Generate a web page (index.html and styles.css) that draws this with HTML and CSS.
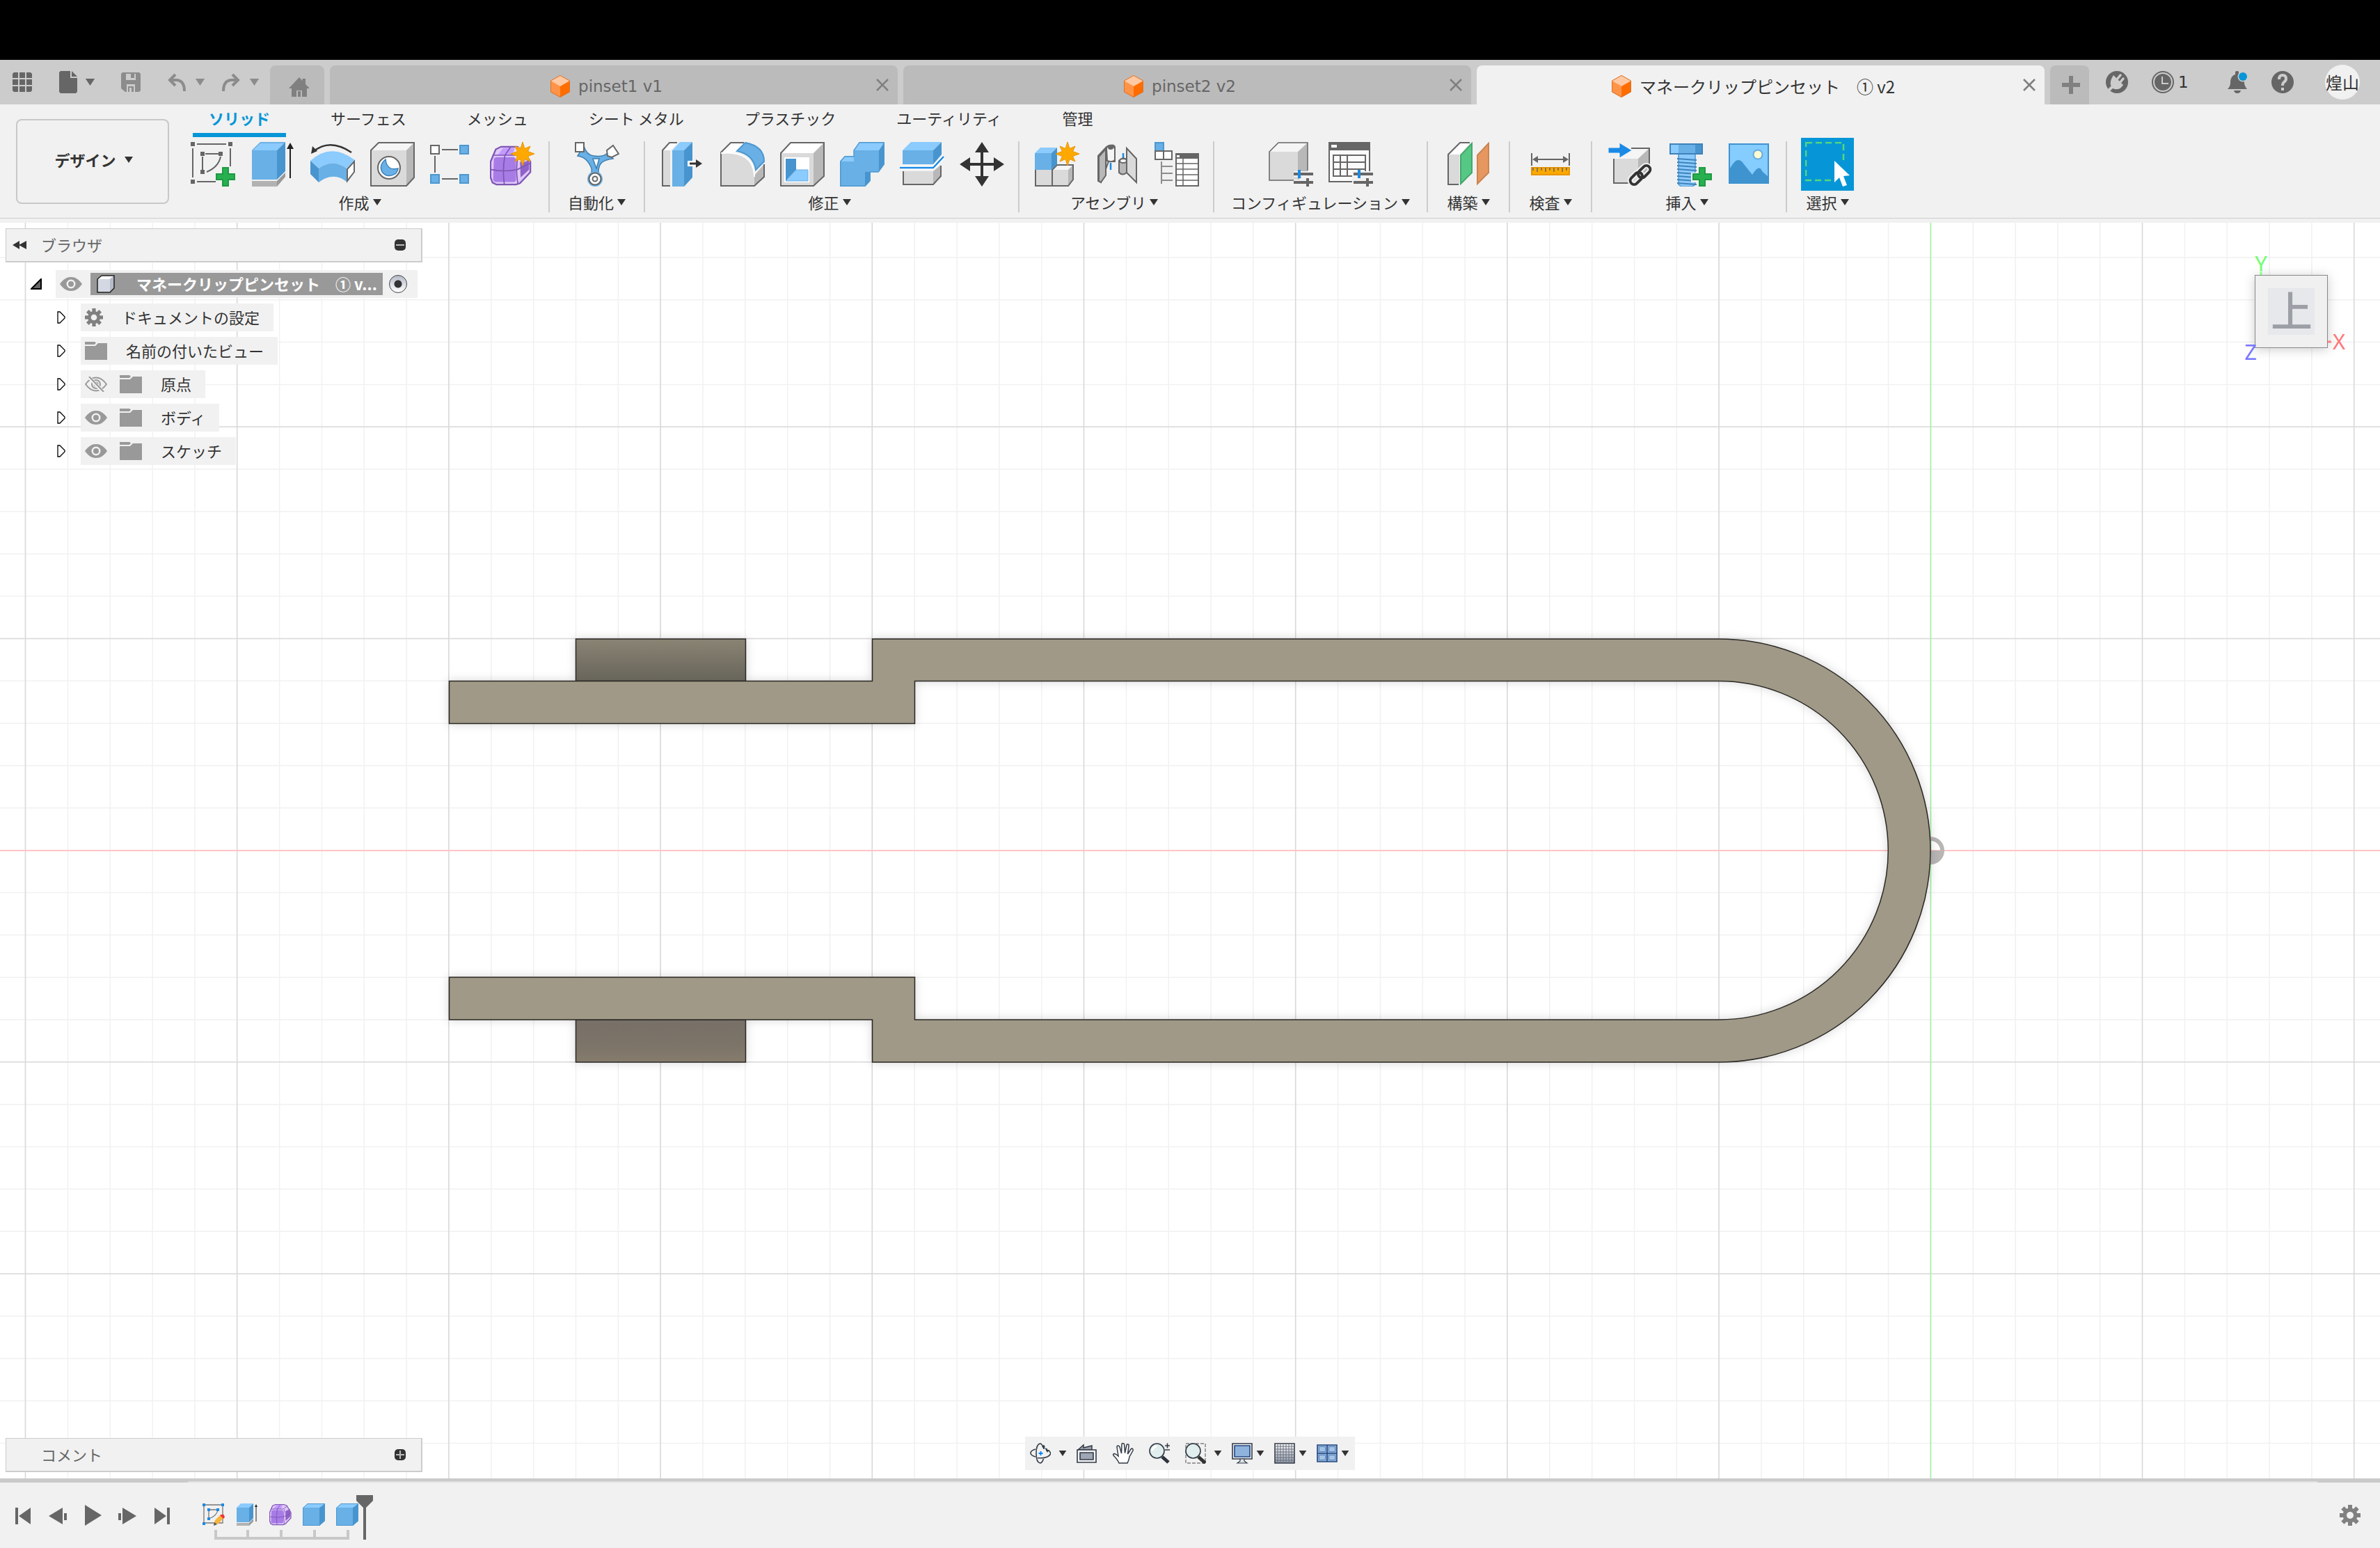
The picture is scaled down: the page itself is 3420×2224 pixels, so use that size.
FILE: index.html
```html
<!DOCTYPE html>
<html lang="ja">
<head>
<meta charset="utf-8">
<title>マネークリップピンセット ① v2</title>
<link rel="stylesheet" href="styles.css">
</head>
<body>
<svg class="defs" aria-hidden="true">
  <defs>
    <symbol id="caret" viewBox="0 0 12 9"><path d="M0 0h12L6 9z" fill="currentColor"/></symbol>
    <symbol id="doc" viewBox="0 0 28 32">
      <path d="M14 0 28 8v16L14 32 0 24V8z" fill="#ff6d00"/>
      <path d="M0 8l14 8v16L0 24z" fill="#ff9448"/>
      <path d="M14 0 28 8 14 16 0 8z" fill="#ffc9a3"/>
      <path d="M14 .5 27.500 8v16L14 31.500.5 24V8z" fill="none" stroke="#d9742b" stroke-width="1"/>
    </symbol>
    <symbol id="close" viewBox="0 0 18 18"><path d="M1 1l16 16M17 1 1 17" stroke="#808080" stroke-width="2.600" fill="none"/></symbol>
    <symbol id="eye" viewBox="0 0 32 20">
      <path d="M0 10C5 3 10 0 16 0s11 3 16 10c-5 7-10 10-16 10S5 17 0 10z" fill="#999"/>
      <circle cx="16" cy="10" r="6.500" fill="#f1f1f1"/><circle cx="16" cy="10" r="4" fill="#999"/>
    </symbol>
    <symbol id="eye-off" viewBox="0 0 32 22">
      <g fill="none" stroke="#999" stroke-width="2">
        <path d="M1 11C6 4 10 1.500 16 1.500S26 4 31 11c-5 7-9 9.500-15 9.500S6 18 1 11z"/>
        <circle cx="16" cy="11" r="6"/><circle cx="16" cy="11" r="2.500"/>
      </g>
      <path d="M5 0l21 22" stroke="#f1f1f1" stroke-width="5"/><path d="M6 0l21 22" stroke="#999" stroke-width="2"/>
    </symbol>
    <symbol id="folder" viewBox="0 0 32 26">
      <path d="M0 0h14l2 1.500-2 2.500H0zM0 6h15l4-4h13v24H0z" fill="#999"/>
    </symbol>
    <symbol id="gear" viewBox="0 0 30 30">
      <g fill="#808080"><path d="M12 0h6v30h-6z"/><path d="M0 12h30v6H0z"/><path d="M12 0h6v30h-6z" transform="rotate(45 15 15)"/><path d="M12 0h6v30h-6z" transform="rotate(-45 15 15)"/><circle cx="15" cy="15" r="10.500"/></g>
      <circle cx="15" cy="15" r="5" fill="#f1f1f1"/>
    </symbol>
    <symbol id="twist" viewBox="0 0 12 18"><path d="M1 1v16h3l7-7V8L4 1z" fill="#fff" stroke="#000" stroke-width="1.300"/></symbol>
    <symbol id="star" viewBox="0 0 34 34">
      <path d="M17 0l3 9.500L28 6l-3.500 7.500L34 17l-9.500 3.500L28 28l-8-3.500L17 34l-3-9.500L6 28l3.500-7.500L0 17l9.500-3.500L6 6l8 3.500z" fill="#ffa800" stroke="#e69500" stroke-width="1"/>
    </symbol>
    <symbol id="plus" viewBox="0 0 28 28"><path d="M10 1h8v9h9v8h-9v9h-8v-9H1v-8h9z" fill="#27b050" stroke="#1f9a43" stroke-width="2"/></symbol>
    <symbol id="bluecube" viewBox="0 0 32 32">
      <path d="M0 6h24v26H0z" fill="#68b0e6"/><path d="M0 6l7-6h25l-8 6z" fill="#8bcbfd"/><path d="M24 6l8-6v25l-8 7z" fill="#4794cf"/>
      <path d="M.5 6.500 7 .5h24.500V25L24 31.500H.5z" fill="none" stroke="#4d98d0"/>
    </symbol>
    <symbol id="form" viewBox="0 0 64 60">
      <path d="M17 1h25l8 3 12 20v16L46 57l-6 2H10l-6-3-3-8V24L9 5z" fill="#e0c8fa" stroke="#7f56b5" stroke-width="2.500"/>
      <path d="M20 3h18L34 14H12z" fill="#c39aff"/>
      <path d="M6 20q1-3 5-3h24q5 0 5 5v29q0 4-4 4H10q-5 0-5-5z" fill="#a87ce6"/>
      <path d="M46 20l14-6v22L47 48z" fill="#8f62c8"/>
      <path d="M2 36q20 4 40 0L62 26M22 58q-3-22 1-44L32 1M4 14h36l12-9M43 58q-4-22 0-43" fill="none" stroke="#7f56b5" stroke-width="1.800"/>
    </symbol>
  </defs>
</svg>

<div class="menubar"></div>

<header class="titlebar">
  <div class="quick">
    <button class="plain" aria-label="データ パネル"><svg width="28" height="28" viewBox="0 0 28 28" fill="#666"><path d="M2 0h6v8H0V2zM10 0h8v8h-8zM20 0h6l2 2v6h-8zM0 10h8v8H0zM10 10h8v8h-8zM20 10h8v8h-8zM0 20h8v8H2l-2-2zM10 20h8v8h-8zM20 20h8v6l-2 2h-6z"/></svg></button>
    <button class="plain quick-file" aria-label="ファイル"><svg width="26" height="32" viewBox="0 0 26 32" fill="#666"><path d="M2 0h14v10h10v20l-2 2H2l-2-2V2z"/><path d="M18 0v8h8z"/></svg><svg class="dark" width="15" height="10"><use href="#caret"/></svg></button>
    <button class="plain quick-save" aria-label="保存"><svg width="28" height="28" viewBox="0 0 28 28"><path d="M2 0h24l2 2v24l-2 2H6l-6-5V2z" fill="#8c8c8c"/><path d="M7 2h14v9H7zM8 17h12v11H8z" fill="#ccc"/><path d="M14 2h5v6h-5zM10 20h8v8h-8z" fill="#8c8c8c"/><path d="M12 22h3v6h-3z" fill="#ccc"/></svg></button>
    <button class="plain quick-undo" aria-label="元に戻す"><svg width="26" height="26" viewBox="0 0 26 26" fill="none" stroke="#8c8c8c" stroke-width="4"><path d="M11 2 3 10l8 8M3 10h10q11 1 11 16"/></svg><svg class="soft" width="15" height="10"><use href="#caret"/></svg></button>
    <button class="plain quick-redo" aria-label="やり直し"><svg width="26" height="26" viewBox="0 0 26 26" fill="none" stroke="#8c8c8c" stroke-width="4"><path d="M15 2l8 8-8 8M23 10H13Q2 11 2 26"/></svg><svg class="soft" width="15" height="10"><use href="#caret"/></svg></button>
  </div>
  <button class="home" aria-label="ホーム"><svg width="30" height="28" viewBox="0 0 30 28" fill="#808080"><path d="M15 0 19.500 5V2H24v8l6 6h-4v12h-7V19h-8v9H4V16H0z"/><path d="M13 20h4v8h-4z"/></svg></button>
  <div class="doc-tabs">
    <div class="doc-tab"><button class="doc-name"><svg width="28" height="32"><use href="#doc"/></svg><span class="latin">pinset1 v1</span></button><button class="doc-close" aria-label="閉じる"><svg width="18" height="18"><use href="#close"/></svg></button></div>
    <div class="doc-tab"><button class="doc-name"><svg width="28" height="32"><use href="#doc"/></svg><span class="latin">pinset2 v2</span></button><button class="doc-close" aria-label="閉じる"><svg width="18" height="18"><use href="#close"/></svg></button></div>
    <div class="doc-tab is-active"><button class="doc-name"><svg width="28" height="32"><use href="#doc"/></svg><span>マネークリップピンセット　① v2</span></button><button class="doc-close" aria-label="閉じる"><svg width="18" height="18"><use href="#close"/></svg></button></div>
  </div>
  <button class="new-tab" aria-label="新規"><svg width="26" height="26" viewBox="0 0 26 26"><path d="M13 0v26M0 13h26" stroke="#808080" stroke-width="6"/></svg></button>
  <div class="account">
    <button class="plain" aria-label="拡張機能"><svg width="32" height="32" viewBox="0 0 32 32"><circle cx="16" cy="16" r="16" fill="#666"/><path d="M11 6 25 20Q19 29 10 25 3 18 11 6z" fill="#ccc"/><path d="M16 12l5-6M20 17l5-6" stroke="#ccc" stroke-width="3.500" stroke-linecap="round"/><path d="M9 23l-7 7" stroke="#ccc" stroke-width="4"/></svg></button>
    <button class="plain jobs" aria-label="ジョブ ステータス"><svg width="32" height="32" viewBox="0 0 32 32"><circle cx="16" cy="16" r="15" fill="none" stroke="#666" stroke-width="2"/><circle cx="16" cy="16" r="12" fill="#666"/><path d="M15 8v10h9" fill="none" stroke="#ccc" stroke-width="2"/></svg><span class="latin">1</span></button>
    <button class="plain bell" aria-label="通知"><svg width="28" height="32" viewBox="0 0 28 32"><path d="M11 1q3-2 5 0v4q8 2 8 12 0 4 4 9H0q4-4 4-9Q4 7 11 5zM9 28h10q-1 4-5 4t-5-4z" fill="#666"/><circle cx="22" cy="8" r="7.500" fill="#ccc"/><circle cx="22" cy="8" r="6" fill="#0696d7"/></svg></button>
    <button class="plain help" aria-label="ヘルプ"><svg width="32" height="32" viewBox="0 0 32 32"><circle cx="16" cy="16" r="16" fill="#666"/><path d="M11 12q0-6 5-6t5 5q0 3-3 5-2 1.500-2 5" fill="none" stroke="#ccc" stroke-width="4"/><path d="M14 24h4v4h-4z" fill="#ccc"/></svg></button>
    <button class="avatar">煌山</button>
  </div>
</header>

<section class="ribbon">
  <button class="workspace">デザイン<svg width="12" height="9"><use href="#caret"/></svg></button>
  <div class="ribbon-main">
    <nav class="ribbon-tabs">
      <button class="ribbon-tab is-active">ソリッド</button>
      <button class="ribbon-tab">サーフェス</button>
      <button class="ribbon-tab">メッシュ</button>
      <button class="ribbon-tab">シート メタル</button>
      <button class="ribbon-tab">プラスチック</button>
      <button class="ribbon-tab">ユーティリティ</button>
      <button class="ribbon-tab">管理</button>
    </nav>
    <div class="groups">
      <div class="group group-first">
        <div class="tools">
          <button class="tool" aria-label="スケッチを作成"><svg viewBox="0 0 64 64"><g fill="none" stroke="#666" stroke-width="2"><path d="M9 3h42M3 9v42M57 9v26M9 57h27M21 17h19M17 21v20M43 21Q40 36 23 43"/></g><path d="M0 0h6v6H0zM54 0h6v6h-6zM0 54h6v6H0zM14 14h6v6h-6zM40 14h6v6h-6zM14 40h6v6h-6z" fill="#666"/><use href="#plus" x="36" y="36" width="28" height="28"/></svg></button>
          <button class="tool" aria-label="押し出し"><svg viewBox="0 0 64 64"><path d="M2 12h36v42H2z" fill="#68b0e6"/><path d="M2 12 14 0h36L38 12z" fill="#8bcbfd"/><path d="M38 12 50 0v42L38 54z" fill="#4794cf"/><path d="M2.500 12 14 1h35" fill="none" stroke="#4d98d0"/><path d="M2 56h36v8H2z" fill="#b2b2b2"/><path d="M38 56l12-12v6L38 64z" fill="#999"/><path d="M57 8v44" stroke="#222" stroke-width="2"/><path d="M57 1l5 9H52z" fill="#222"/></svg></button>
          <button class="tool" aria-label="回転"><svg viewBox="0 0 64 64"><path d="M4 14Q28-6 59 15" fill="none" stroke="#333" stroke-width="2.500"/><path d="M1 17l2-11 7 7z" fill="#333"/><path d="M0 27Q30 0 64 26L52 38Q32 23 12 38z" fill="#8bcbfd"/><path d="M12 38q20-15 40 0v19q-19-15-40 1z" fill="#68b0e6"/><path d="M0 27l12 11v20L0 46z" fill="#4794cf"/><path d="M53 39l10-11v15L53 56z" fill="#fff" stroke="#666" stroke-width="2"/></svg></button>
          <button class="tool" aria-label="穴"><svg viewBox="0 0 64 64"><path d="M1 12h51v51H1z" fill="#dadada"/><path d="M1 12 12 1h51L52 12z" fill="#f5f5f5"/><path d="M52 12 63 1v50L52 63z" fill="#b8b8b8"/><path d="M1 12 12 1h51v50L52 63H1z" fill="none" stroke="#666" stroke-width="2"/><circle cx="27" cy="37" r="16" fill="#fff" stroke="#666" stroke-width="2"/><path d="M22 25Q12 33 17 43q8 10 20 2 3-4 3-7-16 4-18-13z" fill="#68b0e6" stroke="#3f82bb" stroke-width="1.500"/></svg></button>
          <button class="tool" aria-label="パターン"><svg viewBox="0 0 64 64"><path d="M17 11h23M17 53h23M7 20v24" stroke="#666" stroke-width="2"/><path d="M1 5h12v12H1z" fill="#fff" stroke="#666" stroke-width="2"/><path d="M43 5h12v12H43zM1 47h12v12H1zM43 47h12v12H43z" fill="#68b0e6" stroke="#4d98d0" stroke-width="2"/></svg></button>
          <button class="tool" aria-label="フォームを作成"><svg viewBox="0 0 64 64"><use href="#form" x="0" y="4" width="60" height="60"/><circle cx="47" cy="17" r="12" fill="#f1f1f1" opacity=".7"/><use href="#star" x="30" y="0" width="34" height="34"/></svg></button>
        </div>
        <button class="group-label">作成<svg width="12" height="9"><use href="#caret"/></svg></button>
      </div>
      <div class="group group-single">
        <div class="tools">
          <button class="tool" aria-label="自動化"><svg viewBox="0 0 64 64"><path d="M4 20q14 2 20 18 1 6-2 12h15q-5-6-2-14 2-10 20-12l-8-8q-6 6-20 4-10-1-14-14z" fill="#68b0e6" stroke="#3f7fb0" stroke-width="1.500"/><path d="M26 24h9l-4 14z" fill="#fff" stroke="#3f7fb0" stroke-width="1.500"/><circle cx="29" cy="53" r="11" fill="#68b0e6"/><circle cx="29" cy="53" r="8.500" fill="#fff" stroke="#666" stroke-width="2"/><circle cx="29" cy="53" r="3.500" fill="#fff" stroke="#666" stroke-width="2"/><path d="M0 1h13v13H1V1z" fill="#fff" stroke="#666" stroke-width="2"/><path d="M55 5l8 12-10 5-6-2-1-8z" fill="#fff" stroke="#666" stroke-width="2"/></svg></button>
        </div>
        <button class="group-label">自動化<svg width="12" height="9"><use href="#caret"/></svg></button>
      </div>
      <div class="group">
        <div class="tools">
          <button class="tool" aria-label="プレス/プル"><svg viewBox="0 0 64 64"><path d="M3 12h11v51H3z" fill="#dadada"/><path d="M3 12 13 1h12L14 12z" fill="#fff"/><path d="M14 63H3V12L13 1h11" fill="none" stroke="#666" stroke-width="2"/><path d="M17 12h17v52H17z" fill="#68b0e6"/><path d="M17 12 28 0h18L34 12z" fill="#8bcbfd"/><path d="M34 12 46 0v51L34 64z" fill="#4794cf"/><path d="M39 27h10v8H39z" fill="#fff"/><path d="M42 31h12" stroke="#333" stroke-width="3"/><path d="M51 25l9 6-9 6z" fill="#333"/></svg></button>
          <button class="tool" aria-label="フィレット"><svg viewBox="0 0 64 64"><path d="M1 15h11q36 2 37 35v13H1z" fill="#dadada"/><path d="M1 15 15 1h20L24 14q-8 1-23 1z" fill="#fff"/><path d="M49 48l14-16v18L49 63z" fill="#b8b8b8"/><path d="M34 1H15L1 15v48h48l14-13V32" fill="none" stroke="#666" stroke-width="2"/><path d="M1 16q47-4 48 34" fill="none" stroke="#fff" stroke-width="2"/><path d="M24 13 36 1q27 5 27 27L51 40Q48 18 24 13z" fill="#68b0e6" stroke="#4d98d0" stroke-width="2"/></svg></button>
          <button class="tool" aria-label="シェル"><svg viewBox="0 0 64 64"><path d="M1 16h47v47H1z" fill="#dadada"/><path d="M1 16 15 1h48L48 16z" fill="#fff"/><path d="M48 16 63 1v48L48 63z" fill="#b8b8b8"/><path d="M1 16 15 1h48v48L48 63H1z" fill="none" stroke="#666" stroke-width="2"/><path d="M6 22h36v36H6z" fill="#fff"/><path d="M8 24h15v16L8 56z" fill="#4794cf"/><path d="M23 40h17v16H8z" fill="#8bcbfd" stroke="#68b0e6"/></svg></button>
          <button class="tool" aria-label="結合"><svg viewBox="0 0 64 64"><path d="M0 28h20V12h36v31H43v-0L36 64H0z" fill="#68b0e6"/><path d="M0 28l7-8h13v8zM20 12l8-12h36l-8 12z" fill="#8bcbfd"/><path d="M56 12 64 0v32l-8 11zM36 64V43h8v12z" fill="#4794cf"/><path d="M.7 28 7 20.700h13V12l8-11.300h35V32l-8 11H43v13l-7 7.300H.7z" fill="none" stroke="#4d98d0" stroke-width="1.400"/></svg></button>
          <button class="tool" aria-label="面を分割"><svg viewBox="0 0 64 64"><path d="M4 12h44v20H4z" fill="#68b0e6"/><path d="M4 12 16 0h44L48 12z" fill="#8bcbfd"/><path d="M48 12 60 0v18L48 32z" fill="#4794cf"/><path d="M5 42h43v19H5z" fill="#dadada"/><path d="M48 42l11-9v16L48 61z" fill="#b8b8b8"/><path d="M5 42v19h43l11-12V34" fill="none" stroke="#666" stroke-width="2"/><path d="M0 37h48l15-16" fill="none" stroke="#fff" stroke-width="6"/><path d="M0 37h48l15-16" fill="none" stroke="#1a8ae6" stroke-width="2.500"/></svg></button>
          <button class="tool" aria-label="移動/コピー"><svg viewBox="0 0 64 64" fill="#333"><path d="M32 0l10 15h-8v15h15v-8l15 10-15 10v-8H34v15h8L32 64 22 49h8V34H15v8L0 32l15-10v8h15V15h-8z"/></svg></button>
        </div>
        <button class="group-label">修正<svg width="12" height="9"><use href="#caret"/></svg></button>
      </div>
      <div class="group">
        <div class="tools">
          <button class="tool" aria-label="新規コンポーネント"><svg viewBox="0 0 64 64"><path d="M0 40h48v23H0z" fill="#dadada"/><path d="M25 40l7-7h23l-7 7z" fill="#f5f5f5"/><path d="M48 40l7-7v21l-7 9z" fill="#b8b8b8"/><path d="M1 40v23h47l7-9V33H32l-7 7v23" fill="none" stroke="#666" stroke-width="2"/><path d="M0 16h24v24H0z" fill="#68b0e6"/><path d="M0 16l8-8h24l-8 8z" fill="#8bcbfd"/><path d="M24 16l8-8v24l-8 8z" fill="#4794cf"/><circle cx="46" cy="17" r="12" fill="#f1f1f1"/><use href="#star" x="30" y="0" width="34" height="34"/></svg></button>
          <button class="tool" aria-label="ジョイント"><svg viewBox="0 0 64 64" stroke="#666" stroke-width="2"><path d="M5 20 17 7q10-5 12 0v21H20L9 58l-4-2z" fill="#dadada"/><path d="M16 10v38L9 58l-3-2V21z" fill="#b8b8b8"/><path d="M17 9q2-5 7-4t5 6v15q-5 4-11 1z" fill="#f5f5f5"/><ellipse cx="23" cy="8" rx="3" ry="2" fill="#666"/><path d="M23 30v10M41 16v10" stroke="#1a8ae6" stroke-width="2.500"/><path d="M46 9l14 15v34L46 44z" fill="#dadada"/><path d="M35 27q6-7 11-1v18q-6 5-11 0z" fill="#b8b8b8"/><ellipse cx="41" cy="27" rx="5" ry="3" fill="#f5f5f5"/></svg></button>
          <button class="tool" aria-label="部品表"><svg viewBox="0 0 64 64"><path d="M1 1h12v12H1z" fill="#68b0e6" stroke="#4d98d0" stroke-width="2"/><path d="M1 13h12v12H1zM13 13h12v12H13z" fill="#fff" stroke="#666" stroke-width="2"/><path d="M10 28v32M10 35h16M10 45h16M10 55h16" stroke="#8c8c8c" stroke-width="2"/><path d="M31 17h32v46H31z" fill="#fff" stroke="#666" stroke-width="2"/><path d="M30 16h34v8H30z" fill="#666"/><path d="M32 19h4v3h-4z" fill="#fff"/><path d="M31 31h32M31 39h32M31 47h32M31 55h32M41 24v39" stroke="#666" stroke-width="1.500"/></svg></button>
        </div>
        <button class="group-label">アセンブリ<svg width="12" height="9"><use href="#caret"/></svg></button>
      </div>
      <div class="group group-wide">
        <div class="tools">
          <button class="tool" aria-label="モデルをコンフィギュレーション"><svg viewBox="0 0 64 64"><path d="M1 14h41v41H1z" fill="#dadada"/><path d="M1 14 14 1h42L42 14z" fill="#f5f5f5"/><path d="M42 14 56 1v42L42 55z" fill="#b8b8b8"/><path d="M36 55H1V14L14 1h42v40" fill="none" stroke="#666" stroke-width="1.500"/><path d="M36 46h28M36 58h28M56 52v12" stroke="#f1f1f1" stroke-width="8"/><path d="M36 46h28M36 58h28M56 52v12" stroke="#666" stroke-width="4"/><path d="M44 40v12" stroke="#1a8ae6" stroke-width="4"/></svg></button>
          <button class="tool" aria-label="コンフィギュレーション表"><svg viewBox="0 0 64 64"><path d="M1 1h58v56H1z" fill="#fafafa" stroke="#666" stroke-width="2"/><path d="M0 0h60v12H0z" fill="#666"/><path d="M4 4h8v4H4z" fill="#fff"/><path d="M7 19h46v30H7zM7 29h46M7 39h46M17 19v30M27 19v30" fill="none" stroke="#666" stroke-width="2"/><path d="M34 42h30v22H34z" fill="#f1f1f1"/><path d="M36 46h28M36 58h28M56 52v12" stroke="#666" stroke-width="4"/><path d="M44 40v12" stroke="#1a8ae6" stroke-width="4"/></svg></button>
        </div>
        <button class="group-label">コンフィギュレーション<svg width="12" height="9"><use href="#caret"/></svg></button>
      </div>
      <div class="group group-single">
        <div class="tools">
          <button class="tool" aria-label="オフセット平面"><svg viewBox="0 0 64 64"><path d="M3 18h16v43H3z" fill="#dadada"/><path d="M3 18 20 1h14L19 18z" fill="#fff"/><path d="M18 61H3V18L20 1h14" fill="none" stroke="#666" stroke-width="2"/><path d="M21 19 37 2v42L21 60z" fill="#57c785" stroke="#44a86c" stroke-width="2"/><path d="M45 19 61 2v42L45 60z" fill="#e6975f" stroke="#cc8350" stroke-width="2"/></svg></button>
        </div>
        <button class="group-label">構築<svg width="12" height="9"><use href="#caret"/></svg></button>
      </div>
      <div class="group group-single">
        <div class="tools">
          <button class="tool" aria-label="計測"><svg viewBox="0 0 64 64"><path d="M5 16v18M59 16v18M10 25h44" stroke="#666" stroke-width="2"/><path d="M6 25l8-5v10zM58 25l-8-5v10z" fill="#666"/><path d="M5 37h54v10H5z" fill="#ffa800" stroke="#e69500" stroke-width="2"/><path d="M7 37v4M13 37v6M19 37v4M25 37v6M31 37v4M37 37v6M43 37v4M49 37v6M55 37v4" stroke="#666" stroke-width="1.500"/></svg></button>
        </div>
        <button class="group-label">検査<svg width="12" height="9"><use href="#caret"/></svg></button>
      </div>
      <div class="group">
        <div class="tools">
          <button class="tool" aria-label="派生を挿入"><svg viewBox="0 0 64 64"><path d="M9 24h35v35H9z" fill="#dadada"/><path d="M9 24 24 9h36L44 24z" fill="#f5f5f5"/><path d="M44 24 60 9v36L44 59z" fill="#b8b8b8"/><path d="M34 9h26v30M9 24v35h24" fill="none" stroke="#666" stroke-width="2"/><path d="M1 8h16V1l18 11-18 11v-7H1z" fill="#1a8ae6" stroke="#f1f1f1" stroke-width="1"/><g fill="none" stroke="#f1f1f1" stroke-width="8"><rect x="31" y="47" width="20" height="11" rx="5.500" transform="rotate(-45 41 52)"/><rect x="43" y="37" width="20" height="11" rx="5.500" transform="rotate(-45 53 43)"/></g><g fill="none" stroke="#333" stroke-width="4"><rect x="31" y="47" width="20" height="11" rx="5.500" transform="rotate(-45 41 52)"/><rect x="43" y="37" width="20" height="11" rx="5.500" transform="rotate(-45 53 43)"/></g></svg></button>
          <button class="tool" aria-label="ファスナを挿入"><svg viewBox="0 0 64 64"><path d="M16 17h24v44l-4 3H20l-4-3z" fill="#8bcbfd" stroke="#4d98d0" stroke-width="1.500"/><path d="M4 3h46v14H4z" fill="#68b0e6" stroke="#3f82bb" stroke-width="2"/><path d="M5 4h11v12H5z" fill="#8bcbfd"/><path d="M40 4h9v12h-9z" fill="#4794cf"/><path d="M14 24l28 2M14 29l28 2M14 34l28 2M14 39l28 2M14 44l28 2M14 49l28 2M14 54l28 2M14 59l28 2" stroke="#3f82bb" stroke-width="2"/><path d="M34 44h12v14H34z" fill="#f1f1f1"/><use href="#plus" x="36" y="36" width="28" height="28"/></svg></button>
          <button class="tool" aria-label="キャンバス"><svg viewBox="0 0 64 64"><path d="M3 3h56v56H3z" fill="#85ccff"/><path d="M3 40Q14 17 24 32l12 15q10-16 14-5l9 8v9H3z" fill="#3f93cf"/><circle cx="44" cy="18" r="6.500" fill="#fdfbd0" stroke="#68aadf" stroke-width="2"/><path d="M3 3h56v56H3z" fill="none" stroke="#3f93cf" stroke-width="2"/></svg></button>
        </div>
        <button class="group-label">挿入<svg width="12" height="9"><use href="#caret"/></svg></button>
      </div>
      <div class="group group-last">
        <div class="tools">
          <button class="tool tool-on" aria-label="選択"><svg viewBox="0 0 64 64"><path d="M1 1h54v54H1z" fill="none" stroke="#57d87b" stroke-width="2.500" stroke-dasharray="9 5"/><path d="M40 26h24v38H40z" fill="#0696d7"/><path d="M42 27l22 21-9 1 5 13-6 2-5-13-7 7z" fill="#fff"/></svg></button>
        </div>
        <button class="group-label">選択<svg width="12" height="9"><use href="#caret"/></svg></button>
      </div>
    </div>
  </div>
</section>

<main class="canvas">
  <svg class="scene" viewBox="0 320 3420 1804" preserveAspectRatio="xMidYMid slice">
    <defs>
      <linearGradient id="pegTop" x1="0" y1="0" x2="0" y2="1"><stop offset="0" stop-color="#8a8474"/><stop offset="1" stop-color="#67645a"/></linearGradient>
      <linearGradient id="pegLow" x1="0" y1="0" x2="0" y2="1"><stop offset="0" stop-color="#777067"/><stop offset=".6" stop-color="#7c7468"/><stop offset="1" stop-color="#857c6d"/></linearGradient>
    </defs>
    <g fill="none" stroke="#f1f1f1">
      <path d="M-25 1222H3420" stroke-width="1804" stroke-dasharray="1.500 59.340"/>
      <path d="M1710 308.300V2124" stroke-width="3420" stroke-dasharray="1.500 59.340"/>
    </g>
    <g fill="none" stroke="#d9d9d9">
      <path d="M35.700 1222H3420" stroke-width="1804" stroke-dasharray="1.500 302.700"/>
      <path d="M1710 308.300V2124" stroke-width="3420" stroke-dasharray="1.500 302.700"/>
    </g>
    <path d="M2774.500 320v1804" stroke="#a6f7a6" stroke-width="1.500"/>
    <path d="M0 1222h3420" stroke="#ffc4c4" stroke-width="2"/>
    <path d="M2774 1202a20 20 0 0 1 20 20h-6a14 14 0 0 0-14-14zM2774 1222h20a20 20 0 0 1-20 20z" fill="#b9b5b5"/>
    <g class="part" stroke="#2b2925" stroke-width="1.500">
      <path d="M827.500 918h244v60.500h-244z" fill="url(#pegTop)"/>
      <path d="M827.500 1465h244v61h-244z" fill="url(#pegLow)"/>
      <path d="M645.500 978.500h608V918H2470a304 304 0 0 1 0 608H1253.500v-61h-608v-61h669v61H2470a243 243 0 0 0 0-486.500H1314.500v61h-669z" fill="#a09987"/>
    </g>
  </svg>

  <section class="panel panel-browser">
    <button class="plain" aria-label="折りたたむ"><svg width="20" height="12" viewBox="0 0 20 12" fill="#333"><path d="M10 0v12L0 6zM20 0v12L9 6z"/></svg></button>
    <h2>ブラウザ</h2>
    <button class="plain" aria-label="最小化"><svg width="16" height="16" viewBox="0 0 16 16"><rect width="16" height="16" rx="5" fill="#333"/><path d="M2 8h12" stroke="#bbb" stroke-width="2"/></svg></button>
  </section>

  <ul class="tree">
    <li class="row row-root">
      <button class="plain twist" aria-label="閉じる"><svg width="16" height="16" viewBox="0 0 16 16"><path d="M15 1v14H1z" fill="#666" stroke="#000" stroke-width="2"/></svg></button>
      <div class="node">
        <svg width="32" height="20"><use href="#eye"/></svg>
        <div class="root-name">
          <svg width="26" height="26" viewBox="0 0 26 26"><path d="M1 6h18v19H1z" fill="#d3d8e2"/><path d="M1 6l6-5h18l-6 5z" fill="#fff"/><path d="M19 6l6-5v18l-6 6z" fill="#b5bbc9"/><path d="M1 6l6-5h18v18l-6 6H1z" fill="none" stroke="#222" stroke-width="1.500"/></svg>
          <span>マネークリップピンセット　① v...</span>
        </div>
        <input type="radio" class="activate" aria-label="コンポーネントをアクティブ化" checked>
      </div>
    </li>
    <li class="row"><button class="plain twist" aria-label="開く"><svg width="12" height="18"><use href="#twist"/></svg></button><div class="node"><svg width="26" height="26"><use href="#gear"/></svg><span>ドキュメントの設定</span></div></li>
    <li class="row"><button class="plain twist" aria-label="開く"><svg width="12" height="18"><use href="#twist"/></svg></button><div class="node"><svg width="32" height="26"><use href="#folder"/></svg><span>名前の付いたビュー</span></div></li>
    <li class="row"><button class="plain twist" aria-label="開く"><svg width="12" height="18"><use href="#twist"/></svg></button><div class="node"><svg class="vis" width="32" height="22"><use href="#eye-off"/></svg><svg width="32" height="26"><use href="#folder"/></svg><span>原点</span></div></li>
    <li class="row"><button class="plain twist" aria-label="開く"><svg width="12" height="18"><use href="#twist"/></svg></button><div class="node"><svg class="vis" width="32" height="20"><use href="#eye"/></svg><svg width="32" height="26"><use href="#folder"/></svg><span>ボディ</span></div></li>
    <li class="row"><button class="plain twist" aria-label="開く"><svg width="12" height="18"><use href="#twist"/></svg></button><div class="node"><svg class="vis" width="32" height="20"><use href="#eye"/></svg><svg width="32" height="26"><use href="#folder"/></svg><span>スケッチ</span></div></li>
  </ul>

  <svg class="viewcube" width="160" height="190" viewBox="0 -20 160 190">
    <rect class="cube-face" x="20.500" y="35.500" width="104" height="104"/>
    <path d="M39 54h67v67H39z" fill="#e6e8ec"/>
    <text class="cube-text" x="73" y="110">上</text>
    <path d="M29 31v4" stroke="#80ff80" stroke-width="3"/><path d="M125 131h5" stroke="#ff8080" stroke-width="3"/>
    <text class="axis" x="29" y="30" fill="#70ff70">Y</text>
    <text class="axis" x="141" y="142" fill="#ff7878">X</text>
    <text class="axis" x="14" y="157" fill="#7878ff">Z</text>
  </svg>

  <section class="panel panel-comment">
    <h2>コメント</h2>
    <button class="plain" aria-label="展開"><svg width="16" height="16" viewBox="0 0 16 16"><rect width="16" height="16" rx="5" fill="#333"/><path d="M2 8h12M8 2v12" stroke="#bbb" stroke-width="2"/></svg></button>
  </section>

  <div class="navbar">
    <button class="plain nav-far" aria-label="オービット"><svg width="30" height="30" viewBox="0 0 30 30" fill="none" stroke="#333b46" stroke-width="1.600"><path d="M8 9Q1 11 1 14.500T8 20M11 21.500q8 1 14-1.500 8-4 2-9M19 6Q17 1 14.500 1 9 2 9 15t5.500 14q3 0 5-6M22 8l3 2M20 3v6M24 8v4"/><path d="M15.500 12v6M12.500 15h6" stroke="#0a84ff" stroke-width="2"/><path d="M17 5h5l-2 4zM23 10h5l-3 4z" fill="#333b46" stroke="none"/></svg><svg width="12" height="8"><use href="#caret"/></svg></button>
    <button class="plain nav-solo" aria-label="ビュー正面"><svg width="30" height="30" viewBox="0 0 30 30"><path d="M2 10 10 3v4l12-3v6z" fill="#9aa0aa" stroke="#333b46" stroke-width="1.500"/><path d="M1 10h27v18H1z" fill="#f5f5f8" stroke="#333b46" stroke-width="1.600"/><path d="M5 14h19v10H5z" fill="#9fa6b4" stroke="#333b46" stroke-width="1.600"/></svg></button>
    <button class="plain nav-solo" aria-label="画面移動"><svg width="30" height="30" viewBox="0 0 30 30"><path d="M9 29Q7 24 1 18q-1-2 1-2.500 2 0 6 3.500L6 6q0-2 1.500-2T10 6l2.500 9L13 2q0-1.500 1.500-1.500T16.500 2l1 12.500L20 3q.5-1.500 2-1t1 2.500L21.500 16 26 9q1.500-1.500 2.500-.5t.5 2.500L24 20q-1 6-3 9z" fill="#fff" stroke="#333b46" stroke-width="1.500"/></svg></button>
    <button class="plain nav-solo" aria-label="ズーム"><svg width="30" height="30" viewBox="0 0 30 30"><path d="M19 20l9 8" stroke="#2c333d" stroke-width="5"/><circle cx="11.500" cy="11.500" r="10.500" fill="#e0eeee" stroke="#333b46" stroke-width="1.600"/><path d="M5 11q1-5 6-6" stroke="#fff" stroke-width="3" fill="none"/><path d="M23 4h7M26.500.5v7M23 10h7" stroke="#333b46" stroke-width="1.600"/></svg></button>
    <button class="plain nav-far" aria-label="フィット"><svg width="30" height="30" viewBox="0 0 30 30"><path d="M1 1h28v28H1z" fill="none" stroke="#808080" stroke-width="1.400" stroke-dasharray="5 2"/><path d="M19 20l10 9" stroke="#333" stroke-width="5"/><circle cx="11.500" cy="11.500" r="10.500" fill="#e0eeee" stroke="#333b46" stroke-width="1.600"/></svg><svg width="12" height="8"><use href="#caret"/></svg></button>
    <button class="plain nav-near" aria-label="表示設定"><svg width="30" height="30" viewBox="0 0 30 30"><path d="M1 1h28v22H1z" fill="#f5f5f8" stroke="#333b46" stroke-width="1.600"/><path d="M4 4h22v16H4z" fill="#8fb3dd" stroke="#23477d" stroke-width="1.600"/><path d="M12 23h6v3l4 3H8l4-3z" fill="#dfe2e8" stroke="#333b46" stroke-width="1.200"/></svg><svg width="12" height="8"><use href="#caret"/></svg></button>
    <button class="plain nav-near" aria-label="グリッドとスナップ"><svg width="30" height="30" viewBox="0 0 30 30"><defs><linearGradient id="gridFill" x1="0" y1="0" x2="0" y2="1"><stop offset="0" stop-color="#fff"/><stop offset="1" stop-color="#8f99aa"/></linearGradient></defs><path d="M1 1h28v28H1z" fill="url(#gridFill)" stroke="#333b46" stroke-width="1.600"/><path d="M5 1v28M9 1v28M13 1v28M17 1v28M21 1v28M25 1v28M1 5h28M1 9h28M1 13h28M1 17h28M1 21h28M1 25h28" stroke="#6a717d"/></svg><svg width="12" height="8"><use href="#caret"/></svg></button>
    <button class="plain nav-near" aria-label="ビューポート"><svg width="30" height="30" viewBox="0 0 30 30"><path d="M1 3h28v24H1z" fill="#8fb3dd" stroke="#23477d" stroke-width="1.600"/><path d="M15 3v24M1 15h28" stroke="#23477d" stroke-width="1.600"/><path d="M3.500 5.500h9v7h-9zM17.500 5.500h9v7h-9zM3.500 17.500h9v7h-9zM17.500 17.500h9v7h-9z" fill="#a3c2e6" stroke="#5f86b8"/></svg><svg width="12" height="8"><use href="#caret"/></svg></button>
  </div>
</main>

<footer class="timeline">
  <div class="play">
    <button class="plain" aria-label="先頭へ"><svg width="32" height="32" viewBox="0 0 32 32" fill="#666"><path d="M5 4h4v24H5zM27 4v24L10 16z"/></svg></button>
    <button class="plain" aria-label="1つ戻る"><svg width="32" height="32" viewBox="0 0 32 32" fill="#666"><path d="M23 4v24L3 16zM25 12h4v10h-4z"/></svg></button>
    <button class="plain" aria-label="再生"><svg width="32" height="32" viewBox="0 0 32 32" fill="#666"><path d="M5 0l24 15L5 30z"/></svg></button>
    <button class="plain" aria-label="1つ進む"><svg width="32" height="32" viewBox="0 0 32 32" fill="#666"><path d="M9 4v24l20-12zM3 12h4v10H3z"/></svg></button>
    <button class="plain" aria-label="末尾へ"><svg width="32" height="32" viewBox="0 0 32 32" fill="#666"><path d="M23 4h4v24h-4zM5 4v24l17-12z"/></svg></button>
  </div>
  <div class="history">
    <div class="features">
      <button class="plain" aria-label="スケッチ1"><svg width="32" height="32" viewBox="0 0 32 32"><path d="M2 2h27v26H2zM9 9h13q-1 9-13 13z" fill="none" stroke="#777" stroke-width="1.300"/><path d="M0 0h4v4H0zM27 0h4v4h-4zM0 27h4v4H0zM7 7h4v4H7zM20 7h4v4h-4zM7 20h4v4H7z" fill="#1a8ae6"/><path d="M16 31l2-7 8-8 5 4-8 9z" fill="#f6b53d"/><path d="M25 17q5-3 6 0 2 3-1 5z" fill="#f0323c"/><path d="M16 32l1-5 4 3z" fill="#555"/></svg></button>
      <button class="plain" aria-label="押し出し1"><svg width="32" height="32" viewBox="0 0 32 32"><path d="M1 6h18v21H1z" fill="#68b0e6"/><path d="M1 6l6-6h18l-6 6z" fill="#8bcbfd"/><path d="M19 6l6-6v21l-6 6z" fill="#4794cf"/><path d="M1 28h18v4H1z" fill="#b2b2b2"/><path d="M19 28l6-6v4l-6 6z" fill="#999"/><path d="M29 3v23" stroke="#222"/><path d="M29 1l2 4h-4z" fill="#222"/></svg></button>
      <button class="plain" aria-label="フォーム1"><svg width="32" height="32"><use href="#form"/></svg></button>
      <button class="plain" aria-label="ボディ1"><svg width="32" height="32"><use href="#bluecube"/></svg></button>
      <button class="plain" aria-label="ボディ2"><svg width="32" height="32"><use href="#bluecube"/></svg></button>
    </div>
    <svg class="bracket" width="194" height="14" viewBox="0 0 194 14"><path d="M2 0v12h190V0M48 0v12M96 0v12M144 0v12" fill="none" stroke="#c8c8c8" stroke-width="4"/></svg>
    <svg class="marker" width="24" height="64" viewBox="0 0 24 64"><path d="M0 0h24v8l-10 10v46h-4V18L0 8z" fill="#666"/></svg>
  </div>
  <button class="plain settings" aria-label="設定"><svg width="30" height="30"><use href="#gear"/></svg></button>
</footer>
</body>
</html>
```
FILE: styles.css
```css
* { box-sizing: border-box; }

body {
  margin: 0;
  min-height: 100vh;
  display: flex;
  flex-direction: column;
  font-family: "Noto Sans CJK JP", "Noto Sans", sans-serif;
  font-size: 22px;
  line-height: 24px;
  color: #333;
  background: #f1f1f1;
}

button {
  margin: 0;
  padding: 0;
  border: 0;
  background: none;
  color: inherit;
  font: inherit;
  cursor: pointer;
}

svg { display: block; flex: none; }
.defs { position: absolute; width: 0; height: 0; }
.plain { display: flex; align-items: center; }
.latin { font-family: "DejaVu Sans", sans-serif; font-size: 23px; }
.dark { color: #666; }
.soft { color: #8c8c8c; }

.menubar { height: 86px; background: #000; }

/* title bar */
.titlebar {
  display: flex;
  height: 64px;
  background: #ccc;
}

.quick {
  display: flex;
  align-items: center;
  width: 388px;
  padding: 0 14px 0 18px;
}
.quick-file { gap: 11px; margin-left: 39px; }
.quick-save { margin-left: 37px; }
.quick-undo { margin-left: 39px; gap: 13px; }
.quick-redo { margin-left: 24px; gap: 13px; }

.home, .new-tab, .doc-tab {
  display: flex;
  align-items: center;
  justify-content: center;
  margin-top: 8px;
  border-radius: 8px 8px 0 0;
  background: #bbb;
}
.home { width: 78px; padding: 6px 0 0 6px; }
.new-tab { width: 56px; padding-left: 3px; }

.doc-tabs { display: flex; flex: 1; gap: 8px; margin: 0 8px; }
.doc-tab { flex: 1; color: #666; }
.doc-tab.is-active { background: #f1f1f1; color: #333; font-size: 24px; }
.doc-name {
  display: flex;
  flex: 1;
  align-items: center;
  justify-content: center;
  gap: 12px;
  padding: 4px 0 0 10px;
}
.doc-close { display: flex; padding: 0 13px 0 0; }

.account {
  display: flex;
  align-items: center;
  width: 418px;
  padding: 0 29px 0 24px;
}
.jobs { gap: 6px; margin-left: 34px; }
.bell { margin-left: 56px; }
.help { margin-left: 35px; }
.avatar {
  width: 50px;
  height: 50px;
  margin-left: auto;
  border-radius: 50%;
  background: #f1f1f1;
  font-size: 24px;
  white-space: nowrap;
}

/* ribbon */
.ribbon {
  display: flex;
  gap: 31px;
  height: 170px;
  padding-left: 23px;
  background: linear-gradient(#ccc, #ccc) 0 163px / 100% 1px no-repeat #f1f1f1;
}
.workspace {
  display: flex;
  align-items: center;
  justify-content: center;
  gap: 12px;
  width: 220px;
  height: 122px;
  margin-top: 21px;
  padding: 0 0 6px 3px;
  border: 2px solid #c8c8c8;
  border-radius: 8px;
  font-weight: 700;
}
.ribbon-tabs { display: flex; gap: 41px; margin-left: 3px; }
.ribbon-tab {
  height: 47px;
  padding: 0 23px 4px;
  border-bottom: 6px solid transparent;
  white-space: nowrap;
}
.ribbon-tab.is-active {
  border-color: #0696d7;
  color: #0696d7;
  font-weight: 700;
}

.groups { display: flex; margin-top: 6px; }
.group {
  display: flex;
  flex-direction: column;
  align-items: center;
  height: 102px;
  padding: 1px 20px 0 22px;
  border-right: 2px solid #ccc;
}
.group-first { padding-left: 0; }
.group-single { padding-left: 26px; padding-right: 26px; }
.group-wide { padding-left: 24px; padding-right: 24px; }
.group-last { border-right: 0; padding-left: 20px; }
.tools { display: flex; gap: 22px; height: 64px; }
.tool { width: 64px; height: 64px; }
.tool svg { width: 64px; height: 64px; }
.tool-on {
  width: 76px;
  height: 76px;
  margin-top: -6px;
  padding: 6px;
  background: #0696d7;
}
.group-label {
  display: flex;
  align-items: center;
  gap: 5px;
  margin: 10px 8px 0 0;
  white-space: nowrap;
}
.group-single .group-label,
.group-wide .group-label,
.group-last .group-label { margin-right: 0; }

/* model canvas */
.canvas {
  position: relative;
  flex: 1;
  overflow: hidden;
  background: #fff;
}
.scene { position: absolute; inset: 0; width: 100%; height: 100%; }
.part { filter: drop-shadow(0 0 7px rgba(0, 0, 0, 0.16)); }

.panel {
  position: absolute;
  left: 8px;
  display: flex;
  align-items: center;
  width: 599px;
  height: 49px;
  padding: 0 22px 0 9px;
  border: 1px solid #ccc;
  border-width: 1px 2px 2px 1px;
  background: #f1f1f1;
}
.panel-browser { top: 8px; }
.panel-comment { bottom: 9px; padding-left: 50px; }
.panel h2 {
  flex: 1;
  margin: 0;
  padding-bottom: 2px;
  font-size: 22px;
  font-weight: 400;
  color: #666;
}
.panel-browser h2 { margin-left: 21px; }

.tree {
  position: absolute;
  top: 68px;
  left: 0;
  display: flex;
  flex-direction: column;
  gap: 8px;
  margin: 0;
  padding: 0;
  list-style: none;
}
.row { display: flex; align-items: center; height: 40px; padding-left: 82px; }
.row-root { padding-left: 44px; }
.twist { width: 34px; }
.row-root .twist { width: 36px; }
.node {
  display: flex;
  align-items: center;
  height: 40px;
  padding: 0 20px 0 6px;
  background: #f1f1f1;
}
.node > span { margin-left: 27px; padding-bottom: 3px; }
.vis { margin-right: 18px; }
.row-root .node { width: 520px; padding-right: 15px; }
.root-name {
  display: flex;
  align-items: center;
  width: 420px;
  height: 32px;
  margin-left: 12px;
  padding-left: 9px;
  background: #999;
  color: #fff;
  font-weight: 700;
}
.root-name span {
  margin-left: 31px;
  padding-bottom: 2px;
  white-space: nowrap;
}
.activate {
  appearance: none;
  width: 26px;
  height: 26px;
  margin: 0 0 0 9px;
  border: 1px solid #444;
  border-radius: 50%;
  background: radial-gradient(circle, #333 0 5px, transparent 6px), linear-gradient(#b4bac8, #fff);
}

.viewcube { position: absolute; top: 20px; right: 40px; }
.cube-face {
  fill: #f0f0f0;
  stroke: #888;
  filter: drop-shadow(0 2px 8px rgba(0, 0, 0, 0.2));
}
.cube-text { font-size: 60px; font-weight: 500; fill: #9c9fa6; text-anchor: middle; }
.axis { font-family: "Liberation Sans Narrow", "Noto Sans", sans-serif; font-size: 31px; text-anchor: middle; }

.navbar {
  position: absolute;
  left: 50%;
  bottom: 12px;
  display: flex;
  align-items: center;
  gap: 14px;
  height: 48px;
  padding: 0 8px 0 7px;
  background: #f1f1f1;
  transform: translateX(-50%);
}
.nav-far { gap: 11px; }
.nav-near { gap: 5px; }
.nav-solo { padding-right: 8px; }

/* timeline */
.timeline {
  display: flex;
  align-items: flex-start;
  height: 100px;
  padding: 34px 28px 0 17px;
  border-top: 4px solid #cacaca;
  background: linear-gradient(#dedede, #dedede) 270px 0 / calc(100% - 360px) 2px no-repeat, linear-gradient(#cacaca, #cacaca) 0 0 / 100% 2px no-repeat #f1f1f1;
}
.play { display: flex; gap: 18px; }
.history { position: relative; flex: 1; margin: -2px 0 0 42px; }
.features { display: flex; gap: 16px; }
.bracket { margin: 6px 0 0 17px; }
.marker { position: absolute; left: 221px; top: -12px; }
```
